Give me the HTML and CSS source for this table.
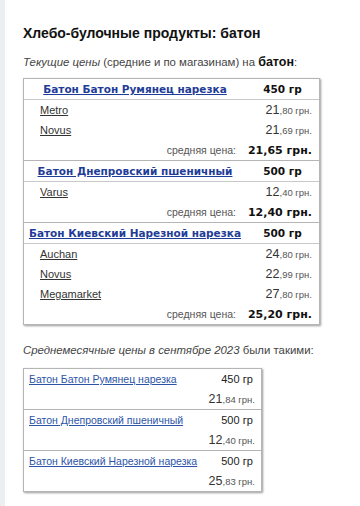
FILE: index.html
```html
<!DOCTYPE html>
<html lang="ru">
<head>
<meta charset="utf-8">
<link rel="stylesheet" href="styles.css">
</head>
<body>
<div class="page">
  <h1 class="title">Хлебо-булочные продукты: батон</h1>
  <p class="lead"><i>Текущие цены</i> (средние и по магазинам) на <b>батон</b>:</p>

  <div class="prices">
    <div class="group">
      <div class="head"><a class="prod" href="#">Батон Батон Румянец нарезка</a><span class="wt">450 гр</span></div>
      <div class="row"><a class="shop" href="#">Metro</a><span class="price">21<small>,80 грн.</small></span></div>
      <div class="row"><a class="shop" href="#">Novus</a><span class="price">21<small>,69 грн.</small></span></div>
      <div class="avg"><span class="lbl">средняя цена:</span><span class="val">21,65 грн.</span></div>
    </div>
    <div class="group">
      <div class="head"><a class="prod" href="#">Батон Днепровский пшеничный</a><span class="wt">500 гр</span></div>
      <div class="row"><a class="shop" href="#">Varus</a><span class="price">12<small>,40 грн.</small></span></div>
      <div class="avg"><span class="lbl">средняя цена:</span><span class="val">12,40 грн.</span></div>
    </div>
    <div class="group">
      <div class="head"><a class="prod" href="#">Батон Киевский Нарезной нарезка</a><span class="wt">500 гр</span></div>
      <div class="row"><a class="shop" href="#">Auchan</a><span class="price">24<small>,80 грн.</small></span></div>
      <div class="row"><a class="shop" href="#">Novus</a><span class="price">22<small>,99 грн.</small></span></div>
      <div class="row"><a class="shop" href="#">Megamarket</a><span class="price">27<small>,80 грн.</small></span></div>
      <div class="avg"><span class="lbl">средняя цена:</span><span class="val">25,20 грн.</span></div>
    </div>
  </div>

  <p class="lead second"><i>Среднемесячные цены в сентябре 2023</i> были такими:</p>

  <div class="monthly">
    <div class="mgroup">
      <div class="mrow"><a class="mprod" href="#">Батон Батон Румянец нарезка</a><span class="mwt">450 гр</span></div>
      <div class="mprow"><span class="mprice">21<small>,84 грн.</small></span></div>
    </div>
    <div class="mgroup">
      <div class="mrow"><a class="mprod" href="#">Батон Днепровский пшеничный</a><span class="mwt">500 гр</span></div>
      <div class="mprow"><span class="mprice">12<small>,40 грн.</small></span></div>
    </div>
    <div class="mgroup">
      <div class="mrow"><a class="mprod" href="#">Батон Киевский Нарезной нарезка</a><span class="mwt">500 гр</span></div>
      <div class="mprow"><span class="mprice">25<small>,83 грн.</small></span></div>
    </div>
  </div>
</div>
</body>
</html>
```

FILE: styles.css
```css
html, body {
  margin: 0;
  padding: 0;
}
body {
  background: #eceef2;
  font-family: "Liberation Sans", Arial, sans-serif;
  color: #222;
}
.page {
  margin-left: 5px;
  background: #fff;
  min-height: 506px;
  padding: 24px 0 0 18px;
  box-sizing: border-box;
}
.title {
  margin: 0;
  font-size: 14px;
  line-height: 18px;
  font-weight: bold;
  color: #111;
}
.lead {
  margin: 12px 0 8px;
  font-size: 11.4px;
  line-height: 16px;
  color: #444;
}
.lead b {
  color: #111;
  font-size: 12.5px;
}
.prices {
  width: 297px;
  box-sizing: border-box;
  border: 1px solid #b5b5b5;
  box-shadow: 1px 1px 2px #9a9a9a;
}
.group + .group {
  border-top: 1px solid #b5b5b5;
}
.head {
  display: grid;
  grid-template-columns: 222px 1fr;
  height: 20px;
  align-items: center;
  border-bottom: 1px solid #c8c8c8;
  font-family: "DejaVu Sans", Verdana, sans-serif;
  font-weight: bold;
  font-size: 10.5px;
  white-space: nowrap;
}
.prod {
  justify-self: center;
  color: #1f3d98;
}
.wt {
  text-align: center;
  color: #111;
}
.row {
  display: flex;
  justify-content: space-between;
  align-items: center;
  height: 20px;
  padding: 0 7px 0 16px;
}
.shop {
  color: #333;
  font-size: 11px;
}
.price, .mprice {
  font-size: 12.5px;
  color: #333;
}
.price small, .mprice small {
  font-size: 9.5px;
  color: #555;
}
.avg {
  display: grid;
  grid-template-columns: 222px 1fr;
  height: 20px;
  align-items: center;
}
.lbl {
  text-align: right;
  padding-right: 10px;
  font-size: 10.5px;
  color: #555;
}
.val {
  text-align: right;
  padding-right: 7px;
  font-family: "DejaVu Sans", Verdana, sans-serif;
  font-weight: bold;
  font-size: 11px;
  color: #111;
  white-space: nowrap;
}
.lead.second {
  margin: 17px 0 10px;
}
.monthly {
  width: 239px;
  box-sizing: border-box;
  border: 1px solid #b5b5b5;
  box-shadow: 1px 1px 2px #9a9a9a;
}
.mgroup + .mgroup {
  border-top: 1px solid #b5b5b5;
}
.mrow {
  display: flex;
  align-items: center;
  height: 20px;
  padding: 0 0 0 5px;
}
.mprod {
  flex: 0 0 184px;
  color: #2c55a8;
  font-size: 10.5px;
  white-space: nowrap;
}
.mwt {
  flex: 1;
  text-align: center;
  font-size: 11px;
  color: #222;
  white-space: nowrap;
}
.mprow {
  display: flex;
  justify-content: flex-end;
  align-items: center;
  height: 20px;
  padding-right: 6px;
}
.mprice {
  white-space: nowrap;
}
```
